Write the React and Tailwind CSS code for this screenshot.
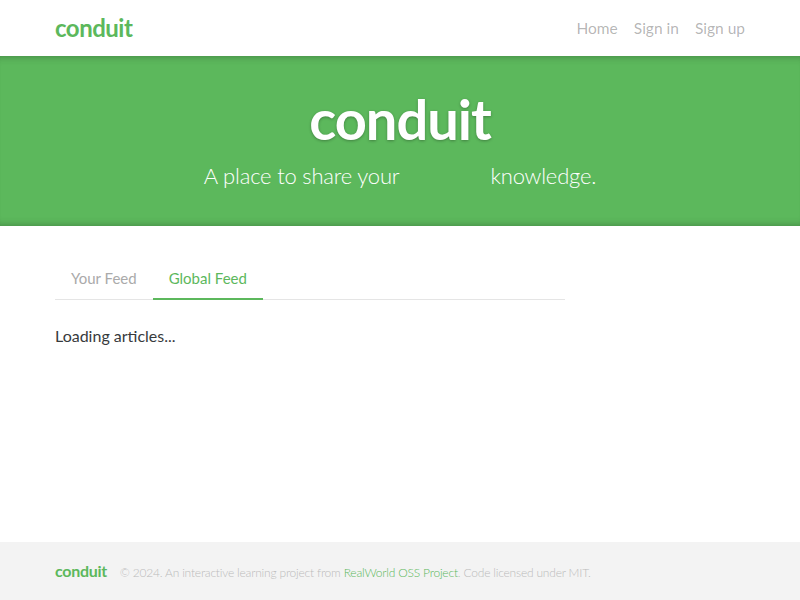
import React from 'react';

const green = 'text-[#5cb85c]';

function Navbar() {
  return (
    <nav className="bg-white">
      <div className="mx-auto w-[720px] px-[15px] h-14 flex items-center justify-between">
        <a className={`${green} font-bold text-[24px] tracking-[-0.5px] leading-none`}>conduit</a>
        <ul className="flex gap-4 text-[15.5px] text-black/30">
          <li>Home</li>
          <li>Sign in</li>
          <li>Sign up</li>
        </ul>
      </div>
    </nav>
  );
}

function Banner() {
  return (
    <div className="bg-[#5cb85c] text-white py-8 shadow-[inset_0_8px_8px_-8px_rgba(0,0,0,0.3),inset_0_-8px_8px_-8px_rgba(0,0,0,0.3)]">
      <div className="mx-auto w-[720px] px-[15px] text-center">
        <h1 className="text-[56px] font-bold leading-[1.1] pb-2 tracking-[-1px] [text-shadow:0_1px_3px_rgba(0,0,0,0.3)]">conduit</h1>
        <p className="text-[22px] font-light leading-[36px] tracking-[-0.2px]">
          A place to share your <span className="inline-block w-[80px]"></span> knowledge.
        </p>
      </div>
    </div>
  );
}

function Feed() {
  return (
    <div className="mx-auto w-[720px] px-[15px] pt-8">
      <div className="w-[510px]">
        <ul className="flex border-b border-[#e5e5e5] text-[15px]">
          <li className="px-4 py-2 leading-6 text-[#aaa] mb-[-1px]">Your Feed</li>
          <li className={`px-4 py-2 leading-6 ${green} border-b-2 border-[#5cb85c] mb-[-1px]`}>Global Feed</li>
        </ul>
        <div className="py-6 text-[#373a3c]">Loading articles...</div>
      </div>
    </div>
  );
}

function Footer() {
  return (
    <footer className="mt-auto bg-[#f3f3f3] h-[58px] flex items-center">
      <div className="mx-auto w-[720px] px-[15px] flex items-baseline leading-none">
        <a className={`${green} font-bold text-[16px] tracking-[-0.3px]`}>conduit</a>
        <span className="ml-[13px] text-[12px] tracking-[-0.2px] font-light text-[#bbb]">
          © 2024. An interactive learning project from <a className={green}>RealWorld OSS Project</a>. Code licensed under MIT.
        </span>
      </div>
    </footer>
  );
}

export default function App() {
  return (
    <div className="min-h-screen flex flex-col font-['Lato',sans-serif] leading-6">
      <Navbar />
      <Banner />
      <Feed />
      <Footer />
    </div>
  );
}
